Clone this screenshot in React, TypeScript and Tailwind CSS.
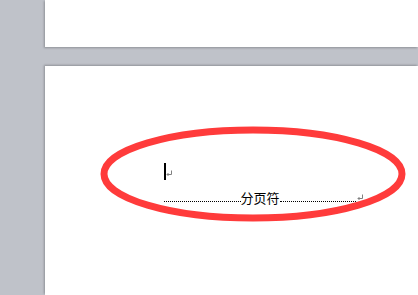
export default function App() {
  return (
    <div className="relative flex h-[295px] w-[418px] overflow-hidden bg-[#bfc2c9]">
      <div className="w-[45px] shrink-0" />
      <div className="flex flex-1 flex-col gap-[19px]">
        <div className="h-[47px] bg-white shadow-[-1px_1px_2px_rgba(0,0,0,0.25)]" />
        <div className="flex-1 bg-white pl-[119px] pt-[97px] shadow-[-1px_-1px_2px_rgba(0,0,0,0.25)]">
          <div className="flex h-[17px] items-end">
            <div className="h-[17px] w-[2px] bg-black" />
            <div className="-ml-[1px] mb-[2px]">
              <ReturnMark />
            </div>
          </div>
          <div className="mt-[9px] flex w-[200px] items-center font-['Noto_Sans_CJK_SC',sans-serif] text-[13px] leading-[17px] text-black">
            <div className="mt-[7px] h-0 flex-1 border-b border-dotted border-black" />
            <span>分页符</span>
            <div className="mt-[7px] h-0 flex-1 border-b border-dotted border-black" />
            <ReturnMark />
          </div>
        </div>
      </div>
      <svg className="pointer-events-none absolute left-0 top-0" width="418" height="295">
        <ellipse cx="253" cy="174" rx="149" ry="44" fill="none" stroke="#ff3b3b" strokeWidth="7" />
      </svg>
    </div>
  );
}

function ReturnMark() {
  return (
    <svg width="7" height="7" viewBox="0 0 7 7" className="mb-[1px] ml-[1px] shrink-0">
      <path d="M5.5 0.5 V4.5 H1" fill="none" stroke="#808080" strokeWidth="1" />
      <path d="M2.5 3 L1 4.5 L2.5 6" fill="none" stroke="#808080" strokeWidth="1" />
    </svg>
  );
}
